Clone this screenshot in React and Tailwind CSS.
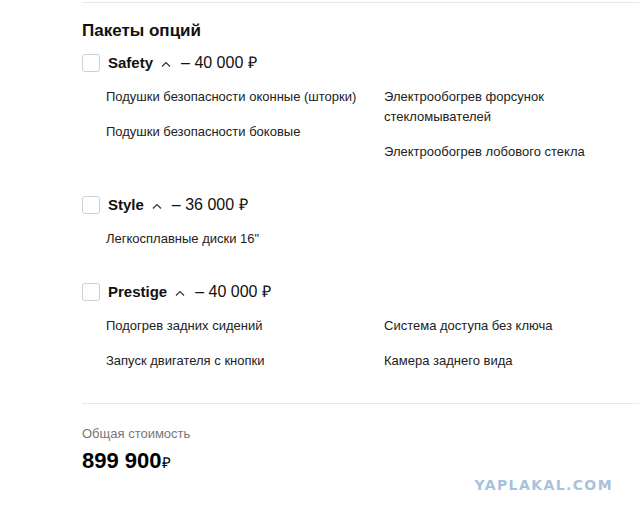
import React from 'react';

const packages = [
  {
    name: 'Safety',
    price: '– 40 000 ₽',
    left: ['Подушки безопасности оконные (шторки)', 'Подушки безопасности боковые'],
    right: ['Электрообогрев форсунок стекломывателей', 'Электрообогрев лобового стекла'],
  },
  {
    name: 'Style',
    price: '– 36 000 ₽',
    left: ['Легкосплавные диски 16"'],
    right: [],
  },
  {
    name: 'Prestige',
    price: '– 40 000 ₽',
    left: ['Подогрев задних сидений', 'Запуск двигателя с кнопки'],
    right: ['Система доступа без ключа', 'Камера заднего вида'],
  },
];

const Chevron = () => (
  <svg className="w-[10px] h-[6px] mx-[8px] mt-[1px]" viewBox="0 0 10 6" fill="none" stroke="#333" strokeWidth="1.2">
    <path d="M1 5.5L5 1.5l4 4" />
  </svg>
);

const OptionColumn = ({ items, width }) => (
  <div className={`flex flex-col gap-[15px] ${width}`}>
    {items.map((item) => (
      <div key={item} className="text-[13px] leading-[20px] text-[#222]">{item}</div>
    ))}
  </div>
);

const Package = ({ pkg }) => (
  <div className="flex flex-col">
    <label className="flex items-center h-[18px]">
      <span className="w-[18px] h-[18px] rounded-[3px] border border-[#cfcfcf] bg-white" />
      <span className="ml-[8px] text-[15px] font-bold text-[#111]">{pkg.name}</span>
      <Chevron />
      <span className="ml-[2px] text-[16px] text-[#111]">{pkg.price}</span>
    </label>
    <div className="flex pl-[24px] mt-[15px]">
      <OptionColumn items={pkg.left} width="w-[278px]" />
      <OptionColumn items={pkg.right} width="w-[210px]" />
    </div>
  </div>
);

export default function App() {
  return (
    <div className="w-[639px] h-[515px] bg-white flex flex-col font-['Liberation_Sans',Arial,sans-serif]">
      <div className="pt-[2px] pl-[82px]">
        <div className="border-t border-[#e8e8e8]" />
        <h2 className="mt-[18px] text-[17px] leading-[20px] font-bold text-[#111]">Пакеты опций</h2>
        <div className="mt-[13px] flex flex-col gap-[34px]">
          {packages.map((pkg) => (
            <Package key={pkg.name} pkg={pkg} />
          ))}
        </div>
        <div className="mt-[32px] border-t border-[#e8e8e8]" />
        <div className="mt-[21px] text-[13px] leading-[18px] text-[#777]">Общая стоимость</div>
        <div className="mt-[5px] flex items-baseline text-[#000]">
          <span className="text-[22px] leading-[26px] font-bold">899 900</span>
          <span className="text-[15px]">₽</span>
        </div>
      </div>
      <div className="flex-1 flex items-end justify-end pr-[26px] pb-[24px]">
        <span className="text-[14px] font-black tracking-[0.1em] text-[#a8c2da] font-['DejaVu_Sans',sans-serif]">YAPLAKAL.COM</span>
      </div>
      <div className="h-[4px] bg-[#e6e6e6]" />
    </div>
  );
}
